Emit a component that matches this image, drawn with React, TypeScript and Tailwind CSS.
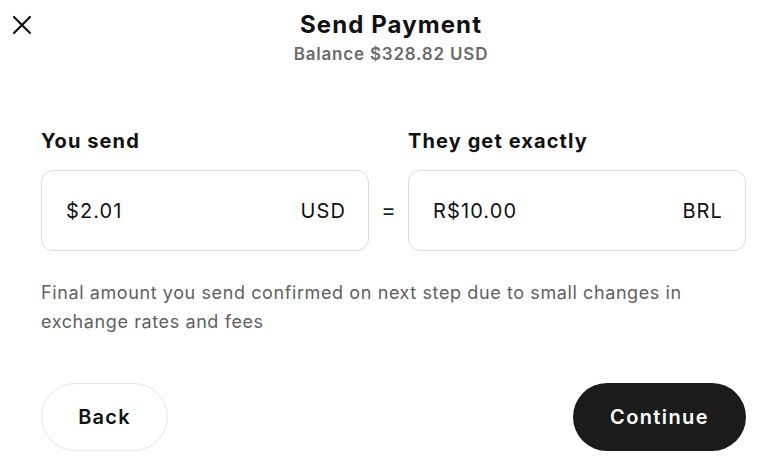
import React from 'react';

function CloseIcon() {
  return (
    <svg width="20" height="20" viewBox="0 0 20 20" fill="none" stroke="#111" strokeWidth="2.2" strokeLinecap="round">
      <path d="M2 2 L18 18 M18 2 L2 18" />
    </svg>
  );
}

function AmountBox({ value, currency, className }: { value: string; currency: string; className: string }) {
  return (
    <div
      className={`h-[81px] rounded-[12px] border border-[#dcdcdc] bg-white flex items-center justify-between pl-[24px] pr-[22px] text-[20px] tracking-[1.1px] text-[#111] ${className}`}
    >
      <span>{value}</span>
      <span>{currency}</span>
    </div>
  );
}

export default function App() {
  return (
    <div
      className="w-[782px] h-[471px] bg-white relative text-[#111]"
      style={{ fontFamily: 'Inter, "Noto Sans", sans-serif' }}
    >
      <button className="absolute left-[12px] top-[15px]">
        <CloseIcon />
      </button>

      <div className="flex flex-col items-center pt-[10px]">
        <h1 className="text-[24px] font-bold leading-[30px] tracking-[1.1px]">Send Payment</h1>
        <div className="text-[17px] font-semibold text-[#6b6b6b] leading-[24px] mt-[2px] tracking-[0.8px]">
          Balance $328.82 USD
        </div>
      </div>

      <div className="pl-[41px] pr-[36px] pt-[62px]">
        <div className="flex items-end">
          <div className="w-[328px]">
            <div className="text-[20px] font-bold leading-[26px] mb-[16px] tracking-[1.1px]">You send</div>
            <AmountBox value="$2.01" currency="USD" className="w-[328px]" />
          </div>
          <div className="w-[39px] h-[81px] flex items-center justify-center text-[22px] text-[#222]">=</div>
          <div className="w-[338px]">
            <div className="text-[20px] font-bold leading-[26px] mb-[16px] tracking-[1.1px]">They get exactly</div>
            <AmountBox value="R$10.00" currency="BRL" className="w-[338px]" />
          </div>
        </div>

        <p className="mt-[27px] text-[18px] leading-[29px] text-[#5f5f5f] max-w-[680px] tracking-[0.6px]">
          Final amount you send confirmed on next step due to small changes in exchange rates and fees
        </p>

        <div className="flex justify-between mt-[47px]">
          <button className="w-[127px] h-[68px] rounded-full border border-[#e6e6e6] bg-white text-[20px] font-semibold text-[#111] tracking-[1.2px]">
            Back
          </button>
          <button className="w-[173px] h-[68px] rounded-full bg-[#1b1b1b] text-[20px] font-semibold text-white tracking-[1.4px]">
            Continue
          </button>
        </div>
      </div>
    </div>
  );
}
